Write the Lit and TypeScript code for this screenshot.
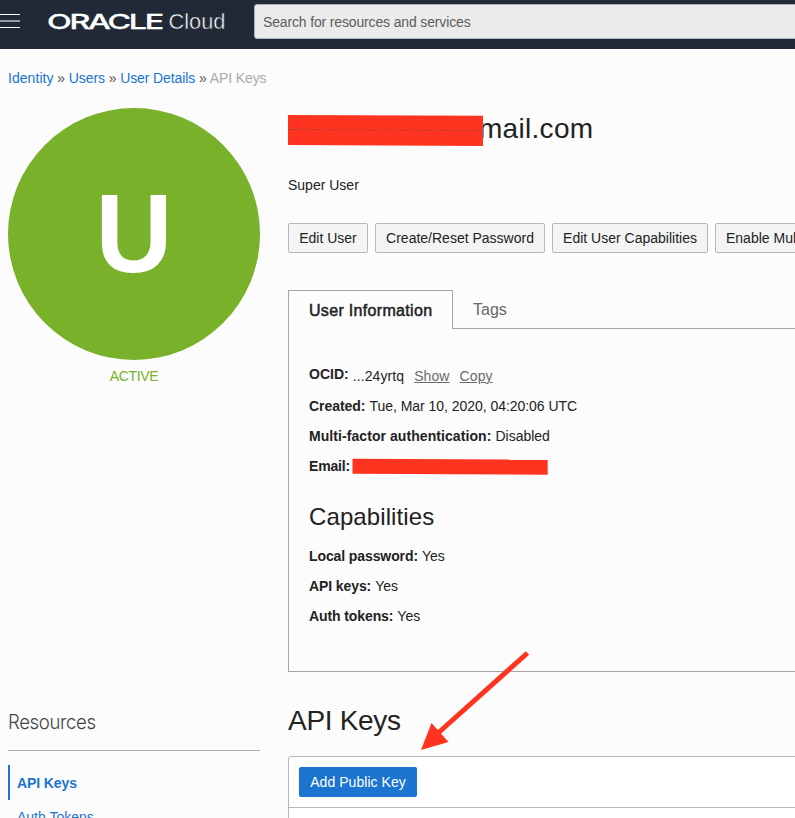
import { LitElement, html, css } from "lit";
import { customElement } from "lit/decorators.js";

const actions = [
  { label: "Edit User", cls: "edit" },
  { label: "Create/Reset Password", cls: "reset" },
  { label: "Edit User Capabilities", cls: "caps" },
  { label: "Enable Multi-Factor Authentication", cls: "mfa" },
];

const capabilities = [
  ["Local password:", "Yes"],
  ["API keys:", "Yes"],
  ["Auth tokens:", "Yes"],
];

@customElement("cloud-header")
export class CloudHeader extends LitElement {
  static styles = css`
    :host { display: flex; height: 49px; background: #212936; overflow: hidden; }
    .menu { flex: none; width: 48px; height: 49px; }
    .logo { flex: none; width: 206px; height: 49px; }
    .oracle { font: 500 20px "Inter", sans-serif; letter-spacing: -1.4px; fill: #fff; stroke: #fff; stroke-width: 0.3px; }
    .cloud { font: 21.5px "Liberation Sans", sans-serif; fill: #fff; stroke: #212936; stroke-width: 0.5px; }
    .search {
      box-sizing: border-box; flex: none; width: 560px; height: 35px; margin-top: 4px;
      border: 1px solid #a9b3be; border-radius: 3px; background: #ebebeb;
      padding-left: 8px; font-size: 14px; line-height: 35px; letter-spacing: -0.15px; color: #5c5c5c; white-space: nowrap;
    }
  `;
  render() {
    return html`
      <svg class="menu" viewBox="0 0 48 49">
        <path d="M0 14.5H20M0 27.5H20" stroke="#fff" fill="none" />
        <path d="M0 21H20" stroke="#969ba3" stroke-width="2" fill="none" />
      </svg>
      <svg class="logo" viewBox="0 0 206 49">
        <text class="oracle" x="-1" y="28.8" textLength="115" lengthAdjust="spacingAndGlyphs">ORACLE</text>
        <text class="cloud" x="120.5" y="29.3" textLength="57" lengthAdjust="spacingAndGlyphs">Cloud</text>
      </svg>
      <div class="search">Search for resources and services</div>
    `;
  }
}

@customElement("app-root")
export class AppRoot extends LitElement {
  static styles = css`
    :host {
      display: block; position: relative; width: 795px; height: 818px; overflow: hidden;
      background: #fcfcfc; color: #222; font: 14px/20px "Liberation Sans", Arial, sans-serif;
    }
    .crumbs { height: 20px; margin: 19px 0 0 8px; white-space: nowrap; letter-spacing: -0.1px; color: #555; }
    .link { color: #1b74cf; }
    .link:first-child { letter-spacing: 0.05px; }
    .muted { color: #aaa; }
    .page { display: grid; grid-template-columns: 252px 560px; column-gap: 28px; padding: 20px 0 0 8px; }
    .avatar {
      display: flex; align-items: center; justify-content: center; width: 252px; height: 252px;
      border-radius: 50%; background: #79b12b; color: #fff; font-size: 111px; font-weight: 700; line-height: 252px;
    }
    .initial { transform: scaleX(0.96); }
    .status { margin-top: 6px; text-align: center; letter-spacing: -0.35px; color: #79b12b; }
    .resources {
      height: 27px; margin-top: 323px; padding-bottom: 14px; border-bottom: 1px solid #aeb2bd;
      font: 300 20px/27px "Inter", "Liberation Sans", sans-serif; color: #444;
    }
    .res-word { display: inline-block; letter-spacing: -0.4px; transform: scaleX(0.93); transform-origin: 0 0; }
    .nav { margin-top: 14px; }
    .nav-item { box-sizing: border-box; height: 35px; padding-left: 9px; line-height: 35px; color: #1b74cf; }
    .active { border-left: 2px solid #1b74cf; padding-left: 7px; font-weight: 700; letter-spacing: -0.1px; line-height: 36px; }
    .title { display: flex; height: 42px; align-items: center; font-size: 28px; letter-spacing: 0.3px; }
    .title-redact { flex: none; width: 195px; height: 33px; margin-top: 2px; position: relative; z-index: 1; }
    .mail { margin-left: -4px; }
    .sub { margin-top: 25px; }
    .actions { display: flex; gap: 7px; margin-top: 28px; }
    .btn {
      box-sizing: border-box; flex: none; height: 30px; border: 1px solid #b4b8c2; border-radius: 2px;
      background: #f4f4f4; text-align: center; line-height: 28px; white-space: nowrap;
    }
    .edit { width: 80px; }
    .reset { width: 170px; }
    .caps { width: 156px; }
    .mfa { width: 250px; text-align: left; padding-left: 10px; }
    .tabs { display: flex; height: 39px; margin-top: 37px; font-size: 16px; }
    .tab-on {
      box-sizing: border-box; width: 165px; padding-left: 20px; border: 1px solid #a5a5a5; border-bottom: 0;
      line-height: 39px; letter-spacing: 0.32px; -webkit-text-stroke: 0.5px #222; white-space: nowrap;
    }
    .tab-off { box-sizing: border-box; flex: 1; padding-left: 20px; border-bottom: 1px solid #a5a5a5; line-height: 39px; color: #666; }
    .panel {
      box-sizing: border-box; height: 343px; padding: 32px 0 0 20px; border: solid #a5a5a5; border-width: 0 0 1px 1px;
    }
    .row { display: flex; height: 30px; line-height: 30px; white-space: nowrap; gap: 4px; }
    .row b { font-weight: 700; }
    .ocid { line-height: 26px; }
    .low { line-height: 30px; letter-spacing: 0.1px; }
    .act { margin-left: 6px; line-height: 30px; color: #6b6b6b; text-decoration: underline; letter-spacing: 0.1px; }
    .created { letter-spacing: -0.04px; }
    .factor b { letter-spacing: 0.07px; }
    .cap b { letter-spacing: -0.1px; }
    .mail-redact { width: 196px; height: 18px; margin: 7px 0 0 -2px; }
    .email b { letter-spacing: -0.15px; }
    .h2 { height: 40px; margin: 16px 0 4px; font-size: 24px; line-height: 40px; letter-spacing: 0.1px; }
    .keys { height: 40px; margin-top: 29px; font-size: 28px; line-height: 40px; letter-spacing: -0.3px; }
    .keybox { height: 90px; margin-top: 15px; border: 1px solid #b4b8c2; border-radius: 3px 0 0 0; background: #fff; }
    .bar { height: 50px; border-bottom: 1px solid #b4b8c2; padding-left: 10px; display: flex; align-items: center; }
    .primary { width: 118px; height: 30px; border-radius: 2px; background: #1b74cf; color: #fff; text-align: center; line-height: 30px; letter-spacing: 0.05px; }
    .arrow { position: absolute; left: 415px; top: 645px; width: 120px; height: 110px; }
  `;

  render() {
    return html`
      <cloud-header></cloud-header>
      <div class="crumbs">
        <span class="link">Identity</span> » <span class="link">Users</span> »
        <span class="link">User Details</span> » <span class="muted">API Keys</span>
      </div>
      <div class="page">
        <div class="side">
          <div class="avatar"><span class="initial">U</span></div>
          <div class="status">ACTIVE</div>
          <div class="resources"><span class="res-word">Resources</span></div>
          <div class="nav">
            <div class="nav-item active">API Keys</div>
            <div class="nav-item">Auth Tokens</div>
          </div>
        </div>
        <div class="main">
          <div class="title">
            <svg class="title-redact" viewBox="0 0 195 33">
              <path d="M0 1L195 1.8V32L0 31Z" fill="#ff3420" />
              <path d="M0 15.5L195 16.5" stroke="#b8402c" stroke-width="0.9" stroke-dasharray="14 3 5 2 9 4" />
            </svg>
            <span class="mail">mail.com</span>
          </div>
          <div class="sub">Super User</div>
          <div class="actions">
            ${actions.map((a) => html`<div class="btn ${a.cls}">${a.label}</div>`)}
          </div>
          <div class="tabs">
            <div class="tab-on">User Information</div>
            <div class="tab-off">Tags</div>
          </div>
          <div class="panel">
            <div class="row ocid"><b>OCID:</b><span class="low">...24yrtq</span><span class="act">Show</span><span class="act">Copy</span></div>
            <div class="row created"><b>Created:</b><span>Tue, Mar 10, 2020, 04:20:06 UTC</span></div>
            <div class="row factor"><b>Multi-factor authentication:</b><span>Disabled</span></div>
            <div class="row email">
              <b>Email:</b>
              <svg class="mail-redact" viewBox="0 0 196 18">
                <path d="M0.5 0.8L195.7 1.6V16.8L0.5 15.8Z" fill="#ff3420" />
              </svg>
            </div>
            <div class="h2">Capabilities</div>
            ${capabilities.map(([k, v]) => html`<div class="row cap"><b>${k}</b><span>${v}</span></div>`)}
          </div>
          <div class="keys">API Keys</div>
          <div class="keybox">
            <div class="bar"><div class="primary">Add Public Key</div></div>
          </div>
        </div>
      </div>
      <svg class="arrow" viewBox="0 0 120 110">
        <path d="M112.5 8L22 89" stroke="#ff3420" stroke-width="5" fill="none" />
        <path d="M6 105L16.5 78L33.5 97Z" fill="#ff3420" />
      </svg>
    `;
  }
}
